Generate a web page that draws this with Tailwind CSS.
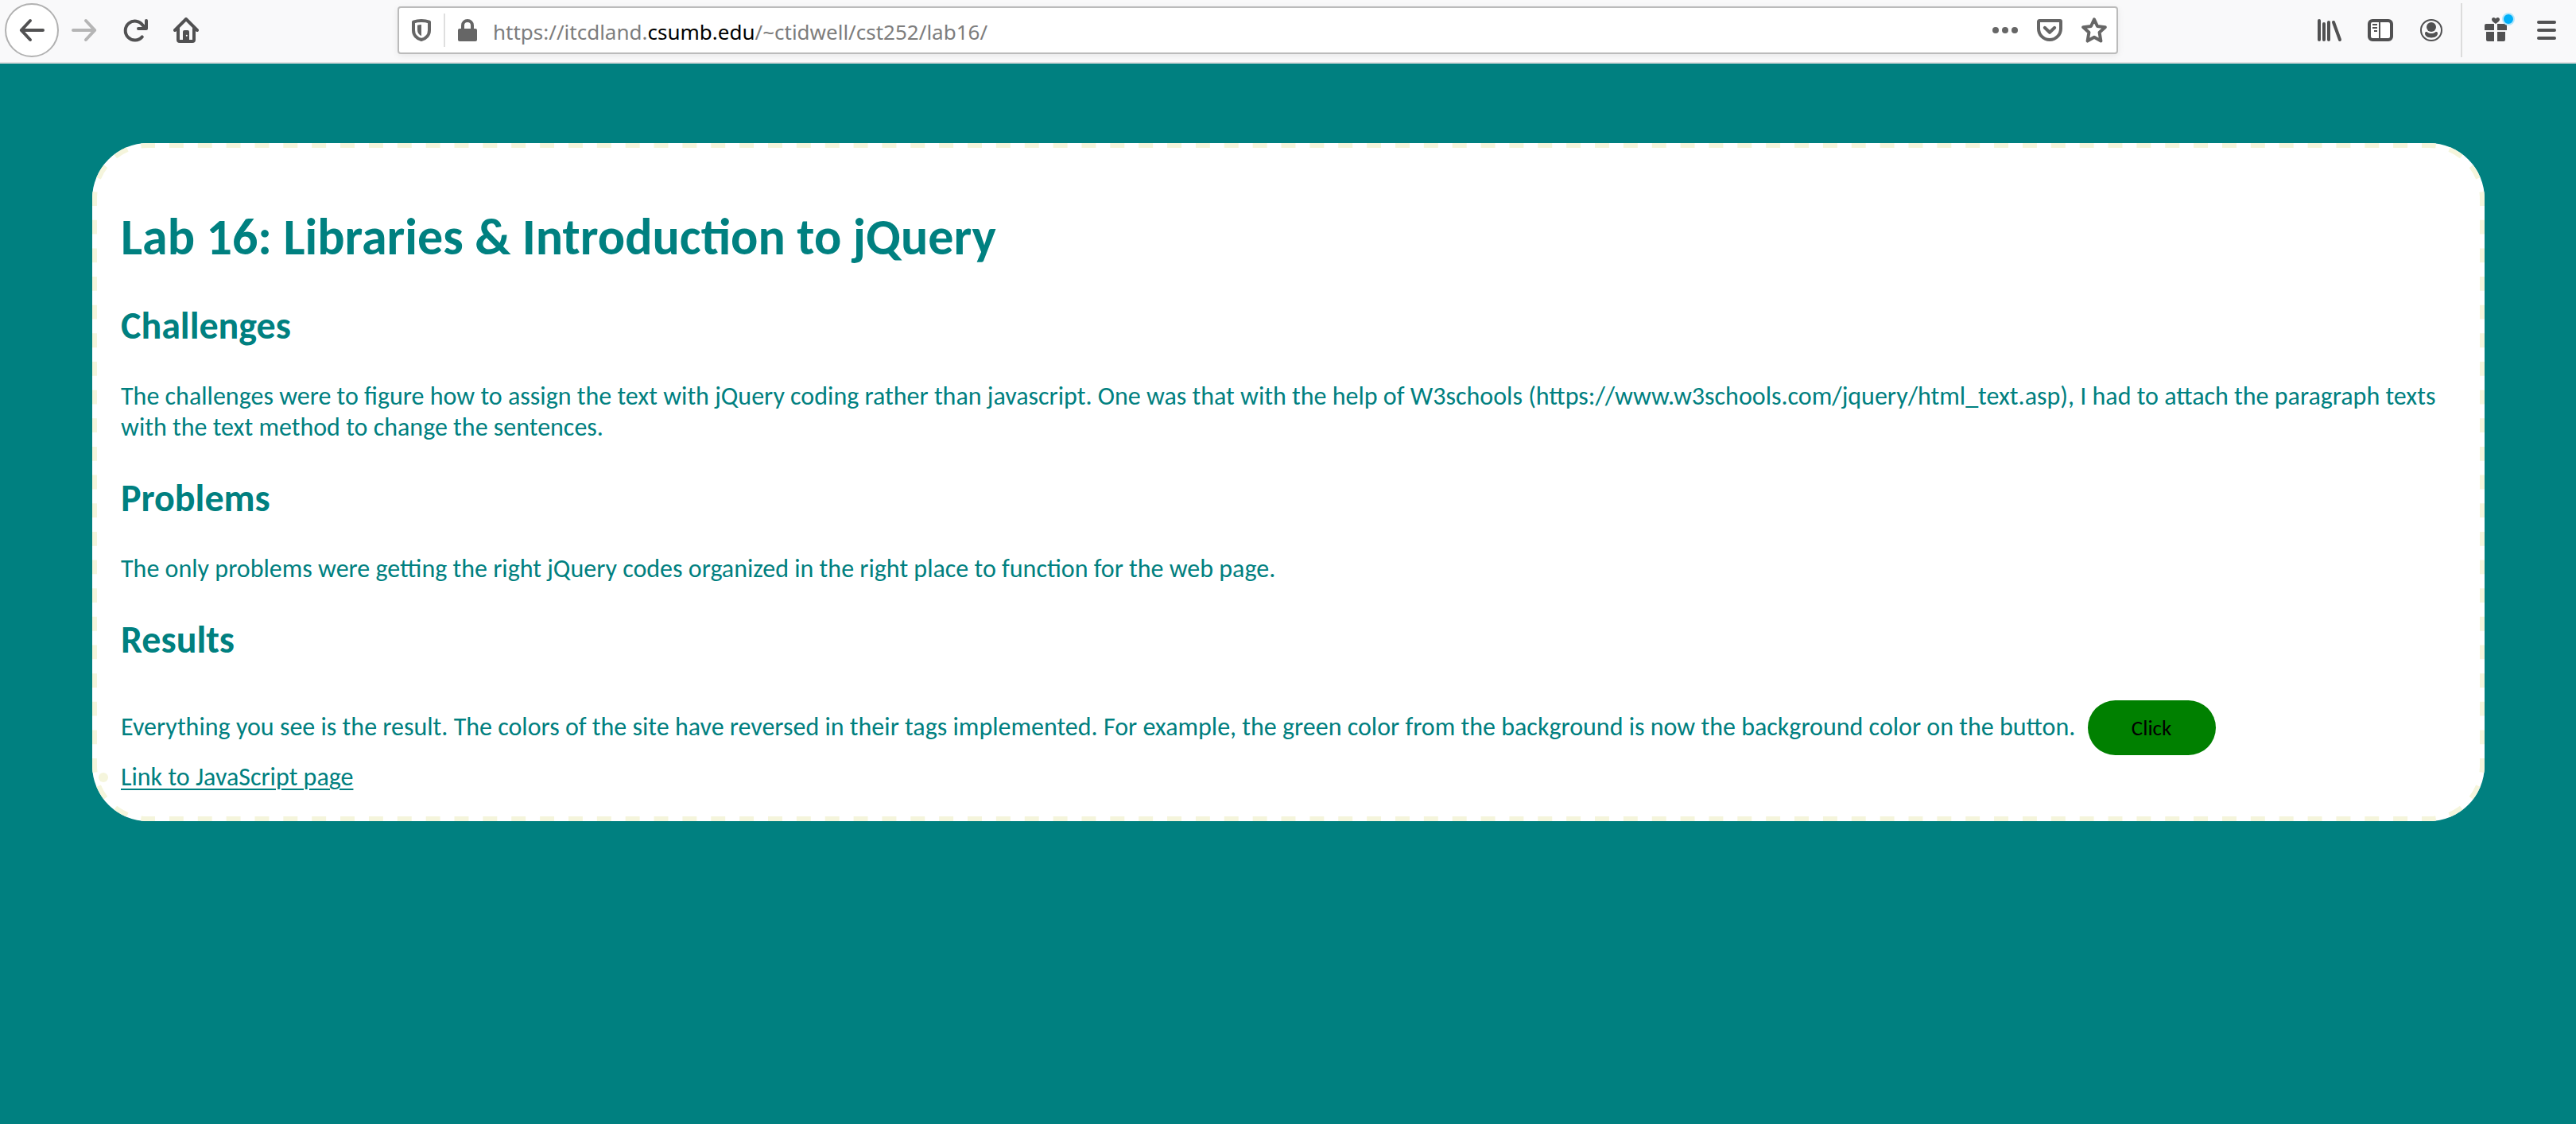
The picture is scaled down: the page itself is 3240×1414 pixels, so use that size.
<!DOCTYPE html>
<html lang="en">
<head>
<meta charset="utf-8">
<meta name="viewport" content="width=device-width, initial-scale=1">
<title>Lab 16</title>
<script src="https://cdn.jsdelivr.net/npm/@tailwindcss/browser@4"></script>
</head>
<body class="min-h-screen flex flex-col bg-[#008080]">

<!-- Browser toolbar -->
<header class="flex items-center h-20 pl-[6px] pr-[5px] pb-[2px] bg-[#f9f9fa] border-b-2 border-[#e0e0e1] text-[#515152]">
  <nav class="flex items-center shrink-0" aria-label="History">
    <button type="button" aria-label="Back" class="flex size-[68px] items-center justify-center rounded-full border-2 border-[#b1b1b1] bg-white">
      <svg class="size-8" viewBox="0 0 16 16" fill="none" stroke="currentColor" stroke-width="2" stroke-linecap="round" stroke-linejoin="round"><path d="M15 8H1.4M7 2 1.4 8 7 14"/></svg>
    </button>
    <button type="button" aria-label="Forward" class="flex size-16 items-center justify-center text-[#b5b5b5]">
      <svg class="size-8" viewBox="0 0 16 16" fill="none" stroke="currentColor" stroke-width="2" stroke-linecap="round" stroke-linejoin="round"><path d="M1 8h13.6M9 2l5.6 6L9 14"/></svg>
    </button>
    <button type="button" aria-label="Reload" class="flex size-16 items-center justify-center">
      <svg class="size-8" viewBox="0 0 16 16" fill="none" stroke="currentColor" stroke-width="2" stroke-linecap="round" stroke-linejoin="round"><path d="M12.4 12.2A6 6 0 1 1 12.8 4.9"/><path d="M15 2v5h-5" /><path d="M15 4v3h-3z" fill="currentColor" stroke-width="1"/></svg>
    </button>
    <button type="button" aria-label="Home" class="flex size-16 items-center justify-center">
      <svg class="size-8" viewBox="0 0 16 16" fill="none" stroke="currentColor" stroke-width="2" stroke-linecap="round" stroke-linejoin="round"><path d="M1 8 8 1l7 7"/><path d="M3 7v7a1 1 0 0 0 1 1h8a1 1 0 0 0 1-1V7"/><path d="M6 15V9a1 1 0 0 1 1-1h2a1 1 0 0 1 1 1v6z" fill="currentColor" stroke="none"/><circle cx="8.4" cy="11.4" r=".5" fill="#fff" stroke="none"/></svg>
    </button>
  </nav>

  <div class="flex flex-1 min-w-0 items-center h-[60px] mx-[234px] pl-3 rounded-[4px] border-2 border-[#bbbbbb] bg-white text-[#666666] shadow-[0_2px_8px_rgba(0,0,0,0.08)]">
    <button type="button" aria-label="Tracking protection" class="shrink-0">
      <svg class="size-8" viewBox="0 0 16 16"><path d="M8 2c2 0 3.6.3 5 .8V8c0 3.2-2.200 5.300-5 6-2.800-.7-5-2.800-5-6V2.800C4.400 2.300 6 2 8 2z" fill="none" stroke="currentColor" stroke-width="2" stroke-linejoin="round"/><path d="M8 4.500v7.100C6.300 10.700 5.500 9.500 5.500 7.700V4.900C6.200 4.700 7 4.500 8 4.500z" fill="currentColor"/></svg>
    </button>
    <span class="ml-3 w-[2px] h-[42px] shrink-0 bg-[#dfdfdf]"></span>
    <button type="button" aria-label="Site information" class="ml-3 shrink-0">
      <svg class="size-8" viewBox="0 0 16 16"><rect x="2" y="7" width="12" height="8" rx="1" fill="currentColor"/><path d="M5 7.500V5a3 3 0 0 1 6 0v2.500" fill="none" stroke="currentColor" stroke-width="2"/></svg>
    </button>
    <div role="textbox" contenteditable="true" aria-label="Address" class="ml-4 pt-1 flex-1 min-w-0 overflow-hidden whitespace-nowrap outline-none font-['Noto_Sans',sans-serif] text-[26px] leading-[36px] text-[#7d7d7d]">https://itcdland.<span class="text-black">csumb.edu</span>/~ctidwell/cst252/lab16/</div>
    <button type="button" aria-label="Page actions" class="flex w-14 shrink-0 items-center justify-center">
      <svg class="size-8" viewBox="0 0 16 16" fill="currentColor"><circle cx="2" cy="8" r="2"/><circle cx="8" cy="8" r="2"/><circle cx="14" cy="8" r="2"/></svg>
    </button>
    <button type="button" aria-label="Save to Pocket" class="flex w-14 shrink-0 items-center justify-center">
      <svg class="size-8" viewBox="0 0 16 16" fill="none" stroke="currentColor" stroke-width="2" stroke-linecap="round" stroke-linejoin="round"><path d="M1.500 2h13a.5.5 0 0 1 .5.5V7A7 7 0 0 1 1 7V2.500a.5.5 0 0 1 .5-.5z"/><path d="M4.900 6.400 8 9.400l3.100-3"/></svg>
    </button>
    <button type="button" aria-label="Bookmark this page" class="flex w-14 shrink-0 items-center justify-center">
      <svg class="size-8" viewBox="0 0 16 16" fill="none" stroke="currentColor" stroke-width="2" stroke-linejoin="round"><path d="M8 1.200 10 5.500l4.900.6-3.600 3.300.9 5.400L8 12.400l-4.200 2.400.9-5.400L1.100 6.100 6 5.500z"/></svg>
    </button>
  </div>

  <div class="flex items-center shrink-0">
    <button type="button" aria-label="Library" class="flex size-16 items-center justify-center">
      <svg class="size-8" viewBox="0 0 16 16" fill="none" stroke="currentColor" stroke-width="2" stroke-linecap="round"><path d="M1.500 2v12M4.500 4v10M7.500 3v11M10.500 3l4 11"/></svg>
    </button>
    <button type="button" aria-label="Sidebars" class="flex size-16 items-center justify-center">
      <svg class="size-8" viewBox="0 0 16 16" fill="none" stroke="currentColor"><rect x="1" y="2" width="14" height="12" rx="2" stroke-width="2" fill="#fff"/><path d="M7.500 3v10M3 4.500h3M3 6.500h3M4 8.500h2"/></svg>
    </button>
    <button type="button" aria-label="Account" class="flex size-16 items-center justify-center">
      <svg class="size-8" viewBox="0 0 16 16"><circle cx="8" cy="8" r="6.500" fill="none" stroke="currentColor"/><circle cx="8" cy="6" r="3" fill="currentColor"/><path d="M4 10c0-.9.8-1.200 1.500-.8 1.500 1 3.500 1 5 0 .7-.4 1.500-.1 1.500.8C12 11.800 10.200 12.700 8 12.700S4 11.800 4 10z" fill="currentColor"/></svg>
    </button>
    <span class="ml-[5px] mr-[10px] w-[2px] h-[68px] bg-[#dcdcdc]"></span>
    <button type="button" aria-label="What's new" class="relative flex size-16 items-center justify-center">
      <svg class="size-8" viewBox="0 0 16 16" fill="currentColor"><path d="M2 4h5v4H1V5a1 1 0 0 1 1-1zM9 4h5a1 1 0 0 1 1 1v3H9zM2 9h5v6H3a1 1 0 0 1-1-1zM9 9h5v5a1 1 0 0 1-1 1H9z"/><path d="M8 4C6.600 3 5.500 2.300 5.500 1.300 5.500.5 6 0 6.700 0 7.300 0 7.800.4 8 .9 8.200.4 8.700 0 9.300 0c.7 0 1.200.5 1.200 1.300C10.500 2.300 9.400 3 8 4z"/></svg>
      <span class="absolute top-[10px] right-2 size-4 rounded-full border-2 border-[#b3e6fb] bg-[#00b0f8]"></span>
    </button>
    <button type="button" aria-label="Menu" class="flex size-16 items-center justify-center">
      <svg class="size-8" viewBox="0 0 16 16" fill="none" stroke="currentColor" stroke-width="2" stroke-linecap="round"><path d="M3 3h10M3 8h10M3 13h10"/></svg>
    </button>
  </div>
</header>

<!-- Page -->
<main class="relative mt-[100px] ml-[116px] mr-[115px] pt-[79px] pb-[36px] px-9 rounded-[70px] bg-white font-['Carlito','Calibri','Lato',sans-serif] text-[32px] leading-[39px] text-[#008080]">

  <!-- Dashed beige edge: four sides and four corners -->
  <div class="absolute inset-0 pointer-events-none text-[#f5f5dc]" aria-hidden="true">
    <div class="absolute top-0 inset-x-[70px] h-[6px]"><svg class="block size-full"><line x1="0" y1="50%" x2="100%" y2="50%" pathLength="160" stroke="currentColor" stroke-width="6" stroke-dasharray="1 1" stroke-dashoffset=".5"/></svg></div>
    <div class="absolute bottom-0 inset-x-[70px] h-[6px]"><svg class="block size-full"><line x1="0" y1="50%" x2="100%" y2="50%" pathLength="160" stroke="currentColor" stroke-width="6" stroke-dasharray="1 1" stroke-dashoffset=".5"/></svg></div>
    <div class="absolute left-0 inset-y-[70px] w-[6px]"><svg class="block size-full"><line x1="50%" y1="0" x2="50%" y2="100%" pathLength="40" stroke="currentColor" stroke-width="6" stroke-dasharray="1 1" stroke-dashoffset=".5"/></svg></div>
    <div class="absolute right-0 inset-y-[70px] w-[6px]"><svg class="block size-full"><line x1="50%" y1="0" x2="50%" y2="100%" pathLength="40" stroke="currentColor" stroke-width="6" stroke-dasharray="1 1" stroke-dashoffset=".5"/></svg></div>
    <svg class="absolute top-0 left-0 size-[70px]" viewBox="0 0 70 70"><path d="M3 70A67 67 0 0 1 70 3" pathLength="6" fill="none" stroke="currentColor" stroke-width="6" stroke-dasharray="1 1" stroke-dashoffset=".5"/></svg>
    <svg class="absolute top-0 right-0 size-[70px]" viewBox="0 0 70 70"><path d="M0 3A67 67 0 0 1 67 70" pathLength="6" fill="none" stroke="currentColor" stroke-width="6" stroke-dasharray="1 1" stroke-dashoffset=".5"/></svg>
    <svg class="absolute bottom-0 right-0 size-[70px]" viewBox="0 0 70 70"><path d="M67 0A67 67 0 0 1 0 67" pathLength="6" fill="none" stroke="currentColor" stroke-width="6" stroke-dasharray="1 1" stroke-dashoffset=".5"/></svg>
    <svg class="absolute bottom-0 left-0 size-[70px]" viewBox="0 0 70 70"><path d="M70 67A67 67 0 0 1 3 0" pathLength="6" fill="none" stroke="currentColor" stroke-width="6" stroke-dasharray="1 1" stroke-dashoffset=".5"/></svg>
  </div>

  <h1 class="text-[64px] leading-[78px] font-bold">Lab 16: Libraries &amp; Introduction to jQuery</h1>

  <h2 class="mt-[44px] mb-[40px] text-[48px] leading-[58px] font-bold">Challenges</h2>
  <p>The challenges were to figure how to assign the text with jQuery coding rather than javascript. One was that with the help of W3schools (https://www.w3schools.com/jquery/html_text.asp), I had to attach the paragraph texts with the text method to change the sentences.</p>

  <h2 class="mt-[41px] mb-[40px] text-[48px] leading-[58px] font-bold">Problems</h2>
  <p>The only problems were getting the right jQuery codes organized in the right place to function for the web page.</p>

  <h2 class="mt-[41px] mb-[40px] text-[48px] leading-[58px] font-bold">Results</h2>
  <p class="pt-[7px]">Everything you see is the result. The colors of the site have reversed in their tags implemented. For example, the green color from the background is now the background color on the button. <button type="button" class="ml-2 h-[69px] w-[161px] rounded-full bg-[#008000] text-[27px] leading-[33px] text-black">Click</button></p>
  <ul class="mt-2">
    <li class="-ml-7 flex items-center gap-4"><span class="size-3 rounded-full bg-[#f5f5dc]"></span><a href="#" class="underline underline-offset-4 decoration-2">Link to JavaScript page</a></li>
  </ul>
</main>
</body>
</html>
